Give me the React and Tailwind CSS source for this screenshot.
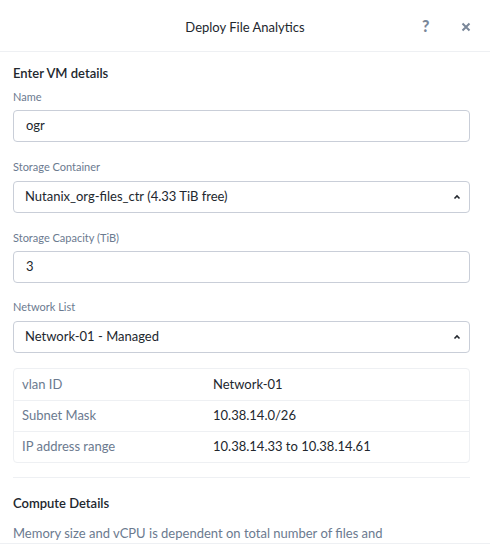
const font = { fontFamily: 'Lato, "Open Sans", sans-serif' };

function Label({ children }) {
    return <div className="text-[11px] leading-[14px] text-[#6b7a8f]">{children}</div>;
}

function TextBox({ value }) {
    return (
        <div className="h-[32px] mt-[6px] border border-[#c9ced8] rounded-[4px] flex items-center px-[12px] text-[13px] text-[#22272e]">
            {value}
        </div>
    );
}

function SelectBox({ value }) {
    return (
        <div className="h-[32px] mt-[7px] border border-[#c9ced8] rounded-[4px] flex items-center justify-between pl-[11px] pr-[8px] text-[13px] text-[#22272e]">
            <span>{value}</span>
            <svg width="8" height="6" viewBox="0 0 8 6" className="text-[#22272e]">
                <path d="M1.5 4.5 L4 2 L6.5 4.5" fill="none" stroke="currentColor" strokeWidth="1.6" />
            </svg>
        </div>
    );
}

export default function App() {
    const rows = [
        ['vlan ID', 'Network-01'],
        ['Subnet Mask', '10.38.14.0/26'],
        ['IP address range', '10.38.14.33 to 10.38.14.61'],
    ];

    return (
        <div className="w-[490px] h-[552px] bg-white overflow-hidden" style={font}>
            {/* Header */}
            <div className="h-[52px] pt-[4px] border-b border-[#eef0f3] relative flex items-center justify-center">
                <span className="text-[13px] text-[#22272e]">Deploy File Analytics</span>
                <span className="absolute left-[422px] top-[16px] text-[16px] leading-[20px] font-black text-[#7a8799]">?</span>
                <svg className="absolute left-[461px] top-[22px]" width="10" height="10" viewBox="0 0 10 10">
                    <path d="M1.5 1.5 L8.5 8.5 M8.5 1.5 L1.5 8.5" stroke="#7a8799" strokeWidth="2" />
                </svg>
            </div>

            {/* Body */}
            <div className="h-[491px] overflow-hidden pl-[13px] pr-[20px]">
                <div className="mt-[13px] text-[13px] leading-[16px] font-semibold text-[#22272e]">Enter VM details</div>

                <div className="mt-[9px]">
                    <Label>Name</Label>
                    <TextBox value="ogr" />
                </div>

                <div className="mt-[18px]">
                    <Label>Storage Container</Label>
                    <SelectBox value="Nutanix_org-files_ctr (4.33 TiB free)" />
                </div>

                <div className="mt-[18px]">
                    <Label>Storage Capacity (TiB)</Label>
                    <TextBox value="3" />
                </div>

                <div className="mt-[17px]">
                    <Label>Network List</Label>
                    <SelectBox value="Network-01 - Managed" />
                </div>

                <div className="mt-[15px] border border-[#eef0f3] rounded-[4px]">
                    {rows.map(([k, v], i) => (
                        <div
                            key={k}
                            className={`h-[31px] flex items-center text-[13px] ${i > 0 ? 'border-t border-[#eef0f3]' : ''}`}
                        >
                            <span className="w-[199px] pl-[8px] text-[#6b7a8f]">{k}</span>
                            <span className="text-[#22272e]">{v}</span>
                        </div>
                    ))}
                </div>

                <div className="mt-[14px] border-t border-[#eef0f3]" />

                <div className="mt-[17px] text-[13px] leading-[16px] font-semibold text-[#22272e]">Compute Details</div>
                <div className="mt-[14px] text-[13px] leading-[16px] text-[#6b7a8f]">
                    Memory size and vCPU is dependent on total number of files and
                </div>
            </div>

            {/* Footer */}
            <div className="h-[9px] border-t border-[#eef0f3]" />
        </div>
    );
}
